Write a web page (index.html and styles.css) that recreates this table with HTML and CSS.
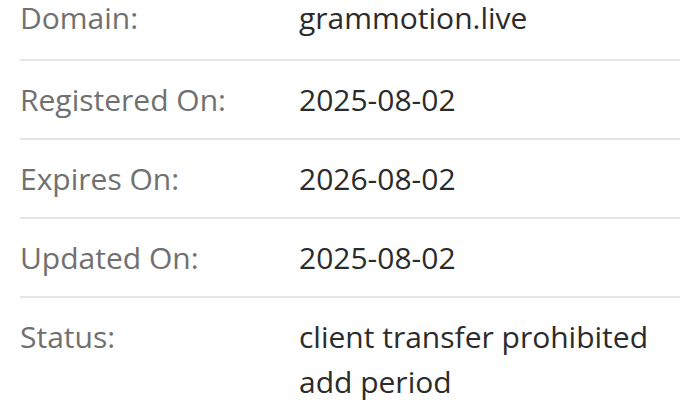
FILE: index.html
```html
<!DOCTYPE html>
<html>
<head>
<meta charset="utf-8">
<link rel="stylesheet" href="styles.css">
</head>
<body>
<div class="whois">
  <div class="row first"><div class="label">Domain:</div><div class="value">grammotion.live</div></div>
  <div class="row"><div class="label">Registered On:</div><div class="value">2025-08-02</div></div>
  <div class="row"><div class="label">Expires On:</div><div class="value">2026-08-02</div></div>
  <div class="row"><div class="label">Updated On:</div><div class="value">2025-08-02</div></div>
  <div class="row last"><div class="label">Status:</div><div class="value"><div>client transfer prohibited</div><div>add period</div></div></div>
</div>
</body>
</html>
```
FILE: styles.css
```css
html, body {
  margin: 0;
  padding: 0;
  background: #ffffff;
  overflow: hidden;
}
body {
  font-family: "Open Sans", "Noto Sans", sans-serif;
  font-size: 30px;
  line-height: 45px;
}
.whois {
  margin: 0 0 0 20px;
}
.row {
  display: grid;
  grid-template-columns: 279px 1fr;
  padding: 16px 0;
  border-bottom: 2px solid #e6e6e6;
}
.row.first {
  padding: 0 0 23px;
  line-height: 36px;
}
.row.last {
  border-bottom: none;
}
.label {
  color: #707070;
}
.value {
  color: #2b2b2b;
}
```
